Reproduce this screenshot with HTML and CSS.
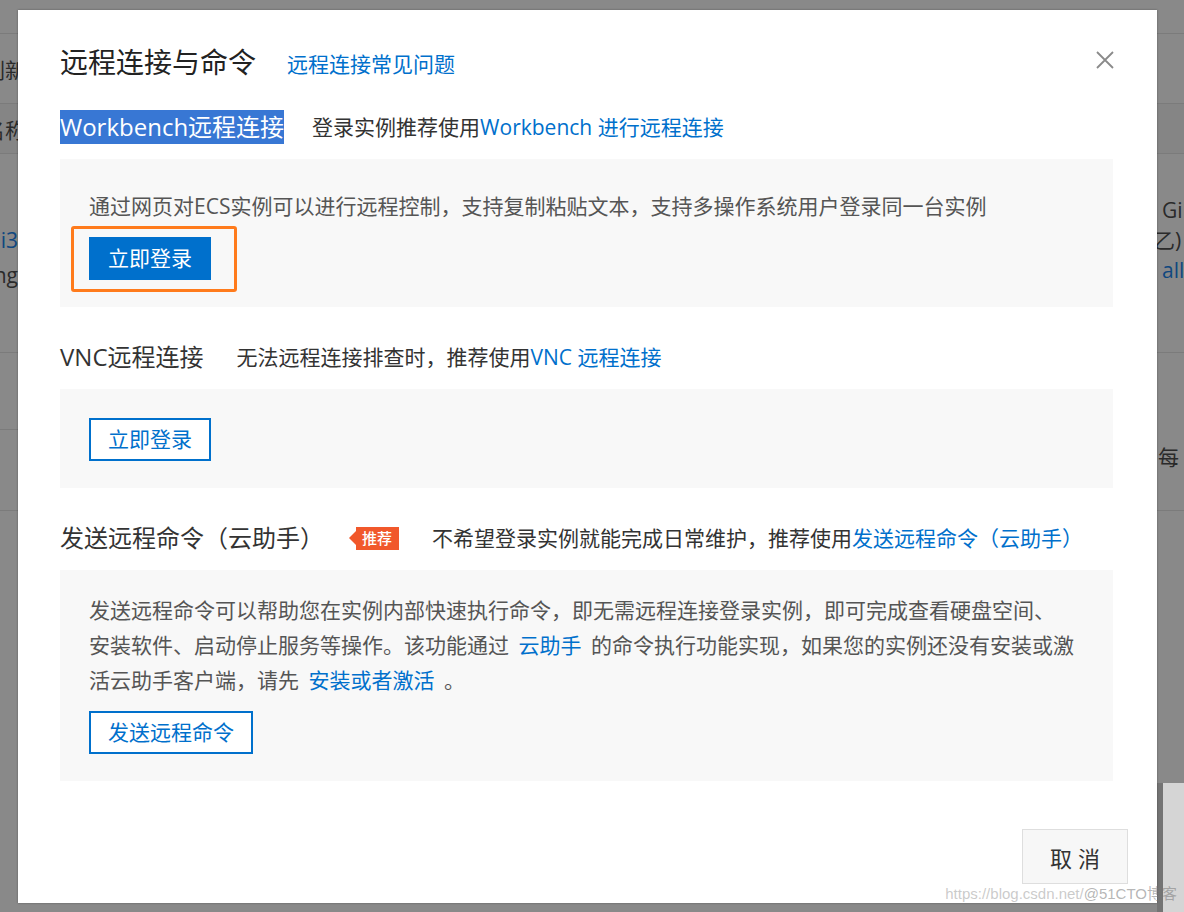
FILE: index.html
```html
<!DOCTYPE html>
<html lang="zh-CN">
<head>
<meta charset="utf-8">
<title>远程连接与命令</title>
<link rel="stylesheet" href="styles.css">
</head>
<body>
<div class="page">
  <div class="page-top"><span class="page-title">实例列表</span></div>
  <div class="page-row r1"><div class="cell-l"><span>刷新</span></div></div>
  <div class="page-row r2"><div class="cell-l"><span>名称</span></div></div>
  <div class="page-row r3">
    <div class="cell-l stack"><span class="blue">hi3</span><span>ng</span></div>
    <div class="cell-r stack"><span class="shift">GiB</span><span>乙)</span><span class="blue shift">all</span></div>
  </div>
  <div class="page-row r4"><div class="cell-l"><span class="blue">l</span></div></div>
  <div class="page-row r5"><span class="cell-r top">每</span></div>
  <div class="page-rest"><div class="side-panel"></div></div>
</div>

<div class="modal">
  <div class="modal-body">
    <div class="modal-header">
      <div class="title-wrap">
        <h1 class="modal-title">远程连接与命令</h1>
        <a class="link faq">远程连接常见问题</a>
      </div>
      <button class="close" aria-label="关闭">
        <svg width="18" height="18" viewBox="0 0 18 18"><path d="M1 1L17 17M17 1L1 17" stroke="#8a8a8a" stroke-width="1.8" fill="none"/></svg>
      </button>
    </div>

    <section class="sec first">
      <div class="sec-head">
        <span class="sec-title selected">Workbench远程连接</span>
        <span class="sec-desc">登录实例推荐使用<a class="link">Workbench 进行远程连接</a></span>
      </div>
      <div class="sec-box b1">
        <p class="box-text">通过网页对ECS实例可以进行远程控制，支持复制粘贴文本，支持多操作系统用户登录同一台实例</p>
        <div class="btn-wrap">
          <button class="btn btn-primary">立即登录</button>
          <span class="annot"></span>
        </div>
      </div>
    </section>

    <section class="sec">
      <div class="sec-head">
        <span class="sec-title">VNC远程连接</span>
        <span class="sec-desc vnc">无法远程连接排查时，推荐使用<a class="link">VNC 远程连接</a></span>
      </div>
      <div class="sec-box b2">
        <button class="btn btn-outline">立即登录</button>
      </div>
    </section>

    <section class="sec">
      <div class="sec-head">
        <span class="sec-title">发送远程命令（云助手）</span>
        <span class="badge">推荐</span>
        <span class="sec-desc wide">不希望登录实例就能完成日常维护，推荐使用<a class="link">发送远程命令（云助手）</a></span>
      </div>
      <div class="sec-box b3">
        <p class="box-text multi">发送远程命令可以帮助您在实例内部快速执行命令，即无需远程连接登录实例，即可完成查看硬盘空间、<br>安装软件、启动停止服务等操作。该功能通过 <a class="link">云助手</a> 的命令执行功能实现，如果您的实例还没有安装或激<br>活云助手客户端，请先 <a class="link">安装或者激活</a> 。</p>
        <button class="btn btn-outline">发送远程命令</button>
      </div>
    </section>
  </div>
  <div class="modal-footer">
    <button class="btn-cancel">取消</button>
  </div>
</div>

<div class="watermark">https://blog.csdn.net/<span class="wm-51">@51CTO博客</span></div>
</body>
</html>
```

FILE: styles.css
```css
* { box-sizing: border-box; margin: 0; padding: 0; }
html, body { width: 1184px; height: 912px; overflow: hidden; }
body {
  background: #898989;
  font-family: "Open Sans", "Noto Sans CJK SC", sans-serif;
  color: #333;
  position: relative;
}

/* dimmed page behind the dialog */
.page { display: flex; flex-direction: column; height: 912px; font-size: 21px; color: #2a2a2a; }
.page-top { height: 34px; border-bottom: 1px solid #7b7b7b; overflow: hidden; }
.page-title { display: block; font-size: 44px; line-height: 44px; margin-top: -44px; margin-left: -10px; color: #111; font-weight: 700; white-space: nowrap; }
.page-row { display: flex; align-items: center; border-bottom: 1px solid #7b7b7b; }
.r1 { height: 70px; }
.r2 { height: 50px; background: #858585; }
.r3 { height: 199px; }
.r4 { height: 78px; border-bottom-color: transparent; }
.r5 { height: 80px; }
.r4 .cell-l { align-self: stretch; border-bottom: 1px solid #7b7b7b; }
.cell-l { width: 18px; flex-shrink: 0; display: flex; justify-content: flex-end; align-items: center; white-space: nowrap; }
.cell-l > span { flex-shrink: 0; margin-right: -8px; }
.cell-r { margin-left: auto; width: 34px; white-space: nowrap; }
.cell-r.top { align-self: flex-start; padding-top: 10px; padding-left: 8px; }
.stack { display: flex; flex-direction: column; line-height: 30px; }
.r3 .cell-l { flex-direction: column; align-items: flex-end; justify-content: flex-start; align-self: flex-start; padding-top: 69px; line-height: 35px; }
.r3 .cell-l > span { margin-right: 0; }
.r3 .cell-r { align-self: flex-start; padding-top: 41px; margin-right: -10px; width: 40px; }
.r3 .cell-r .shift { padding-left: 8px; }
.blue { color: #0f477f; }
.page-rest { flex: 1; display: flex; justify-content: flex-end; align-items: flex-end; }
.side-panel { width: 27px; height: 129px; background: #d5d5d5; border-left: 6px solid #747474; }

/* dialog */
.modal {
  position: absolute;
  left: 18px;
  top: 10px;
  width: 1139px;
  height: 893px;
  background: #fff;
  box-shadow: 0 0 2px rgba(0, 0, 0, 0.35);
  display: flex;
  flex-direction: column;
}
.modal-body { padding: 30px 44px 0 42px; }
.modal-header { display: flex; align-items: center; justify-content: space-between; height: 44px; }
.title-wrap { display: flex; align-items: center; }
.modal-title { font-size: 28px; font-weight: 400; color: #222; line-height: 44px; }
.link { color: #0070cc; text-decoration: none; cursor: pointer; }
.faq { font-size: 21px; margin-left: 31px; margin-top: 2px; }
.close { border: 0; background: none; width: 18px; height: 18px; display: flex; margin-right: -1px; margin-top: -4px; }

.sec { margin-top: 33px; }
.sec.first { margin-top: 26px; }
.sec-head { display: flex; align-items: center; height: 34px; line-height: 34px; }
.sec-title { font-size: 24px; color: #333; white-space: nowrap; }
.sec-title.selected { background: #3877d4; color: #fff; }
.sec-desc { font-size: 21px; margin-left: 28px; color: #333; white-space: nowrap; }
.sec-desc.vnc { margin-left: 33px; }
.sec-desc.wide { margin-left: 33px; }

.badge {
  position: relative;
  margin-left: 32px;
  height: 23px;
  line-height: 23px;
  padding: 0 7px 0 6px;
  background: #f1582b;
  color: #fff;
  font-size: 15px;
  font-weight: 500;
}
.badge::before {
  content: "";
  position: absolute;
  left: -7px;
  top: 4px;
  border-top: 7px solid transparent;
  border-bottom: 7px solid transparent;
  border-right: 7px solid #f1582b;
}

.sec-box { background: #f8f8f8; margin-top: 15px; padding: 29px 29px 27px; }
.sec-box.b1 { padding-top: 31px; }
.sec-box.b3 { padding-top: 23px; padding-bottom: 27px; }
.box-text { font-size: 21px; line-height: 32px; color: #555; }
.box-text.multi { line-height: 35px; }
.box-text .link { margin: 0 4px; }

.btn-wrap { position: relative; display: inline-block; margin-top: 15px; }
.b3 .btn { margin-top: 13px; }
.btn {
  display: inline-block;
  height: 43px;
  padding: 0 17px;
  font-family: inherit;
  font-size: 21px;
  line-height: 39px;
  border: 2px solid #0070cc;
  background: #fff;
  color: #0070cc;
  white-space: nowrap;
  vertical-align: top;
}
.btn-primary { background: #0070cc; color: #fff; }
.annot {
  position: absolute;
  left: -18px;
  top: -11px;
  right: -26px;
  bottom: -12px;
  border: 3px solid #ff7b1c;
  border-radius: 3px;
}

.modal-footer { margin-top: auto; display: flex; justify-content: flex-end; padding: 0 29px 19px 0; }
.btn-cancel {
  width: 106px;
  height: 55px;
  background: #f7f7f7;
  border: 1px solid #dedede;
  font-family: inherit;
  font-size: 22px;
  letter-spacing: 6px;
  padding-left: 6px;
  color: #333;
}

.watermark {
  position: absolute;
  right: 7px;
  top: 884px;
  font-family: "Liberation Sans", "Noto Sans CJK SC", sans-serif;
  font-size: 15px;
  line-height: 20px;
  color: rgba(150, 150, 150, 0.5);
  white-space: nowrap;
}
.wm-51 { color: rgba(120, 120, 120, 0.55); }
```
